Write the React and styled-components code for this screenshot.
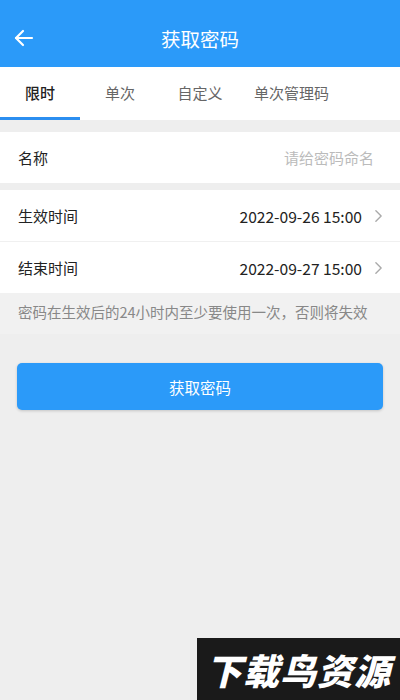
import React, { useState } from "react";
import styled, { createGlobalStyle } from "styled-components";

const GlobalStyle = createGlobalStyle`
  html, body {
    margin: 0;
    padding: 0;
    background: #eeeeee;
    font-family: "Noto Sans CJK SC", "Noto Sans", Roboto, sans-serif;
  }
`;

const tabs = ["限时", "单次", "自定义", "单次管理码"];

const App = () => {
  const [active, setActive] = useState(0);

  return (
    <>
      <GlobalStyle />
      <StyledPage>
        <StyledHeader>
          <StyledBack>
            <svg viewBox="0 0 24 24" fill="none" stroke="#fff" strokeWidth="2.2" strokeLinecap="round" strokeLinejoin="round">
              <path d="M20 12H4" />
              <path d="M11 5l-7 7 7 7" />
            </svg>
          </StyledBack>
          <StyledTitle>获取密码</StyledTitle>
        </StyledHeader>

        <StyledTabs>
          {tabs.map((t, i) => (
            <StyledTab key={t} $active={i === active} onClick={() => setActive(i)}>
              {t}
            </StyledTab>
          ))}
        </StyledTabs>

        <StyledGroup $top={12}>
          <StyledRow>
            <StyledLabel>名称</StyledLabel>
            <StyledPlaceholder>请给密码命名</StyledPlaceholder>
          </StyledRow>
        </StyledGroup>

        <StyledGroup $top={7}>
          <StyledRow $divider>
            <StyledLabel>生效时间</StyledLabel>
            <StyledValue>
              2022-09-26 15:00
              <Chevron />
            </StyledValue>
          </StyledRow>
          <StyledRow>
            <StyledLabel>结束时间</StyledLabel>
            <StyledValue>
              2022-09-27 15:00
              <Chevron />
            </StyledValue>
          </StyledRow>
        </StyledGroup>

        <StyledHint>密码在生效后的24小时内至少要使用一次，否则将失效</StyledHint>

        <StyledButtonWrap>
          <StyledButton>获取密码</StyledButton>
        </StyledButtonWrap>

        <StyledWatermark>下载鸟资源</StyledWatermark>
      </StyledPage>
    </>
  );
};

const Chevron = () => (
  <StyledChevron viewBox="0 0 10 16" fill="none" stroke="#aaaaaa" strokeWidth="1.6" strokeLinecap="round" strokeLinejoin="round">
    <path d="M2 2l6 6-6 6" />
  </StyledChevron>
);

const StyledPage = styled.div`
  position: relative;
  width: 400px;
  height: 700px;
  overflow: hidden;
  background: #eeeeee;
`;

const StyledHeader = styled.div`
  height: 67px;
  background: #2b9af9;
  display: flex;
  align-items: center;
  justify-content: center;
  position: relative;
  padding-top: 10px;
  box-sizing: border-box;
`;

const StyledBack = styled.div`
  position: absolute;
  left: 12px;
  top: 26px;
  width: 24px;
  height: 24px;
  svg {
    width: 24px;
    height: 24px;
  }
`;

const StyledTitle = styled.h1`
  margin: 0;
  color: #fff;
  font-size: 19.5px;
  font-weight: 400;
`;

const StyledTabs = styled.div`
  display: flex;
  height: 53px;
  background: #fff;
`;

const StyledTab = styled.div`
  min-width: 80px;
  padding: 0 14px;
  box-sizing: border-box;
  display: flex;
  align-items: center;
  justify-content: center;
  font-size: 15px;
  color: ${(p) => (p.$active ? "#222" : "#666")};
  font-weight: ${(p) => (p.$active ? 500 : 400)};
  border-bottom: 3px solid ${(p) => (p.$active ? "#2b8ef0" : "transparent")};
  cursor: pointer;
`;

const StyledGroup = styled.div`
  margin-top: ${(p) => p.$top}px;
  background: #fff;
`;

const StyledRow = styled.div`
  height: 51px;
  display: flex;
  align-items: center;
  justify-content: space-between;
  padding: 0 17px 0 18px;
  border-bottom: ${(p) => (p.$divider ? "1px solid #f0f0f0" : "none")};
`;

const StyledLabel = styled.span`
  font-size: 15px;
  color: #222;
`;

const StyledPlaceholder = styled.span`
  font-size: 15px;
  color: #bbbbbb;
  margin-right: 9px;
`;

const StyledValue = styled.span`
  display: flex;
  align-items: center;
  font-size: 15.6px;
  color: #222;
`;

const StyledChevron = styled.svg`
  width: 9px;
  height: 14px;
  margin-left: 12px;
`;

const StyledHint = styled.p`
  margin: 0;
  padding: 8px 18px 12px;
  font-size: 14.5px;
  color: #888;
  background: #f1f1f1;
`;

const StyledButtonWrap = styled.div`
  padding: 29px 17px 0;
`;

const StyledButton = styled.button`
  width: 100%;
  height: 47px;
  border: none;
  border-radius: 5px;
  background: #2b9af9;
  color: #fff;
  font-family: inherit;
  font-size: 15.5px;
  box-shadow: 0 1px 3px rgba(0, 0, 0, 0.18);
  cursor: pointer;
`;

const StyledWatermark = styled.div`
  position: absolute;
  right: 0;
  bottom: 0;
  width: 203px;
  height: 62px;
  background: #1a1a1a;
  color: #fff;
  display: flex;
  align-items: center;
  justify-content: center;
  font-size: 36px;
  font-weight: 900;
  font-style: italic;
  letter-spacing: 1px;
`;

export default App;
